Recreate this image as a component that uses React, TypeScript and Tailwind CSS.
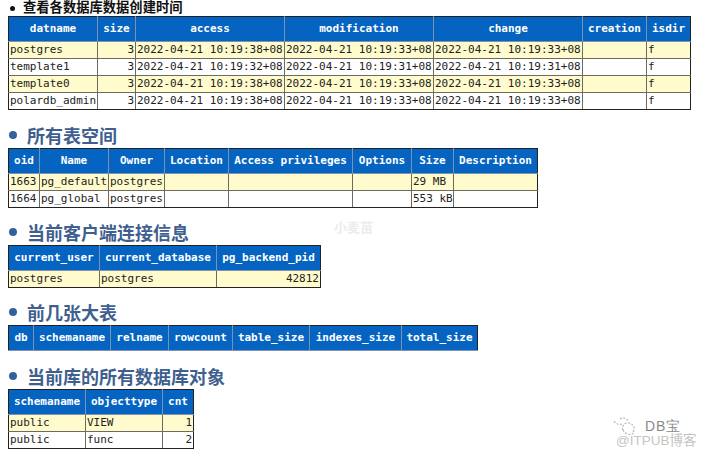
const mono = 'font-["DejaVu_Sans_Mono","Liberation_Mono",monospace]'

type Col = { name: string; w: number; right?: boolean }

function Heading({ text }: { text: string }) {
  return (
    <div className="flex h-[24px] items-center mb-[1px]">
      <span className="ml-[1px] h-[8px] w-[8px] rounded-full bg-[#33619e]" />
      <h2 className='ml-[10px] text-[18px] leading-[24px] font-bold text-[#3f5f8f] font-["Noto_Sans_CJK_SC",sans-serif]'>{text}</h2>
    </div>
  )
}

function DataTable({ cols, rows }: { cols: Col[]; rows: string[][] }) {
  const total = cols.reduce((sum, c) => sum + c.w, 0)
  return (
    <table className={`table-fixed border-collapse border border-[#222] text-[11px] leading-[14px] ${mono}`} style={{ width: total }}>
      <colgroup>
        {cols.map((c) => (
          <col key={c.name} style={{ width: c.w }} />
        ))}
      </colgroup>
      <thead>
        <tr className="h-[25px] bg-[#0563c1]">
          {cols.map((c) => (
            <th key={c.name} className="overflow-hidden border border-[#7d93ad] border-t-[#222] px-0 text-center font-bold whitespace-nowrap text-white first:border-l-[#222] last:border-r-[#222]">
              {c.name}
            </th>
          ))}
        </tr>
      </thead>
      <tbody>
        {rows.map((row, i) => (
          <tr key={i} className={i % 2 === 0 ? 'h-[17px] bg-[#fffbcc]' : 'h-[17px] bg-white'}>
            {row.map((cell, j) => (
              <td key={j} className={`overflow-hidden border border-[#6b6b60] px-[1px] py-0 whitespace-nowrap text-[#222] first:border-l-[#222] last:border-r-[#222] ${i === rows.length - 1 ? 'border-b-[#222]' : ''} ${cols[j].right ? 'text-right' : 'text-left'}`}>
                {cell}
              </td>
            ))}
          </tr>
        ))}
      </tbody>
    </table>
  )
}

const dbCols: Col[] = [
  { name: 'datname', w: 89 },
  { name: 'size', w: 38, right: true },
  { name: 'access', w: 149 },
  { name: 'modification', w: 149 },
  { name: 'change', w: 149 },
  { name: 'creation', w: 64 },
  { name: 'isdir', w: 44 },
]

const dbRows = [
  ['postgres', '3', '2022-04-21 10:19:38+08', '2022-04-21 10:19:33+08', '2022-04-21 10:19:33+08', '', 'f'],
  ['template1', '3', '2022-04-21 10:19:32+08', '2022-04-21 10:19:31+08', '2022-04-21 10:19:31+08', '', 'f'],
  ['template0', '3', '2022-04-21 10:19:38+08', '2022-04-21 10:19:33+08', '2022-04-21 10:19:33+08', '', 'f'],
  ['polardb_admin', '3', '2022-04-21 10:19:38+08', '2022-04-21 10:19:33+08', '2022-04-21 10:19:33+08', '', 'f'],
]

const spaceCols: Col[] = [
  { name: 'oid', w: 31 },
  { name: 'Name', w: 69 },
  { name: 'Owner', w: 56 },
  { name: 'Location', w: 64 },
  { name: 'Access privileges', w: 124 },
  { name: 'Options', w: 59 },
  { name: 'Size', w: 42 },
  { name: 'Description', w: 84 },
]

const spaceRows = [
  ['1663', 'pg_default', 'postgres', '', '', '', '29 MB', ''],
  ['1664', 'pg_global', 'postgres', '', '', '', '553 kB', ''],
]

const connCols: Col[] = [
  { name: 'current_user', w: 91 },
  { name: 'current_database', w: 117 },
  { name: 'pg_backend_pid', w: 104, right: true },
]

const bigCols: Col[] = [
  { name: 'db', w: 25 },
  { name: 'schemaname', w: 77 },
  { name: 'relname', w: 58 },
  { name: 'rowcount', w: 64 },
  { name: 'table_size', w: 77 },
  { name: 'indexes_size', w: 92 },
  { name: 'total_size', w: 76 },
]

const objCols: Col[] = [
  { name: 'schemaname', w: 77 },
  { name: 'objecttype', w: 77 },
  { name: 'cnt', w: 31, right: true },
]

export default function App() {
  return (
    <div className="relative h-[456px] w-[706px] overflow-hidden bg-white pl-[8px]">
      <div className='flex h-[16px] items-center text-[13.3px] leading-[16px] font-bold text-[#111] font-["Liberation_Sans","Noto_Sans_CJK_SC",sans-serif]'>
        <span className="ml-[2px] h-[5px] w-[5px] rounded-full bg-[#111]" />
        <span className="ml-[8px]">查看各数据库数据创建时间</span>
      </div>
      <DataTable cols={dbCols} rows={dbRows} />

      <div className="mt-[13px]">
        <Heading text="所有表空间" />
      </div>
      <DataTable cols={spaceCols} rows={spaceRows} />

      <div className="mt-[12px]">
        <Heading text="当前客户端连接信息" />
      </div>
      <DataTable cols={connCols} rows={[['postgres', 'postgres', '42812']]} />

      <div className="mt-[12px]">
        <Heading text="前几张大表" />
      </div>
      <DataTable cols={bigCols} rows={[]} />

      <div className="mt-[13px]">
        <Heading text="当前库的所有数据库对象" />
      </div>
      <DataTable cols={objCols} rows={[['public', 'VIEW', '1'], ['public', 'func', '2']]} />

      {/* watermarks over the page */}
      <span className='absolute top-[219px] left-[334px] text-[13px] leading-[16px] font-bold text-[#ececec] font-["Noto_Sans_CJK_SC",sans-serif]'>小麦苗</span>
      <svg className="absolute top-[416px] left-[611px] h-[22px] w-[28px]" viewBox="0 0 28 22" fill="none" stroke="#b5b5b5" strokeWidth="1.2" strokeDasharray="2 1.5">
        <path d="M3 5c2 3 5 4 8 3" />
        <path d="M9 3c3-2 7-1 8 2" />
        <path d="M12 14c-2-4 2-8 6-7s7 5 4 9" />
        <path d="M12 14c2 4 7 6 11 3" />
      </svg>
      <span className='absolute top-[418px] left-[645px] text-[14px] leading-[16px] tracking-[1px] text-[#8a8a8a] font-["Liberation_Sans",sans-serif]'>DB宝</span>
      <span className='absolute top-[433px] left-[616px] text-[13.5px] leading-[16px] text-[#c4c4c4] font-["Liberation_Sans","Noto_Sans_CJK_SC",sans-serif]'>@ITPUB博客</span>
    </div>
  )
}
